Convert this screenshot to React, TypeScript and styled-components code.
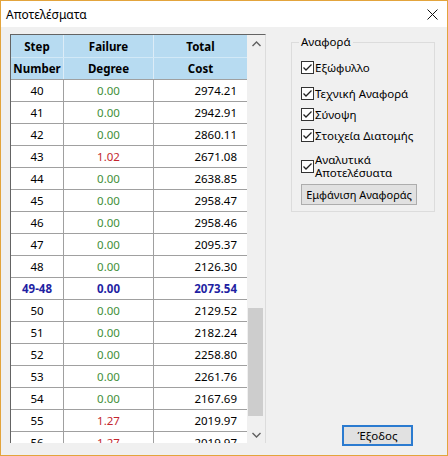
import React from "react";
import styled, { createGlobalStyle } from "styled-components";

const GlobalStyle = createGlobalStyle`
  html, body {
    margin: 0;
    padding: 0;
    background: #f0f0f0;
  }
  body {
    font-family: "Noto Sans", "Liberation Sans", sans-serif;
    font-size: 11.5px;
    color: #000;
  }
`;

type Row = { step: string; degree: string; cost: string; kind?: "fail" | "best" };

const rows: Row[] = [
  { step: "40", degree: "0.00", cost: "2974.21" },
  { step: "41", degree: "0.00", cost: "2942.91" },
  { step: "42", degree: "0.00", cost: "2860.11" },
  { step: "43", degree: "1.02", cost: "2671.08", kind: "fail" },
  { step: "44", degree: "0.00", cost: "2638.85" },
  { step: "45", degree: "0.00", cost: "2958.47" },
  { step: "46", degree: "0.00", cost: "2958.46" },
  { step: "47", degree: "0.00", cost: "2095.37" },
  { step: "48", degree: "0.00", cost: "2126.30" },
  { step: "49-48", degree: "0.00", cost: "2073.54", kind: "best" },
  { step: "50", degree: "0.00", cost: "2129.52" },
  { step: "51", degree: "0.00", cost: "2182.24" },
  { step: "52", degree: "0.00", cost: "2258.80" },
  { step: "53", degree: "0.00", cost: "2261.76" },
  { step: "54", degree: "0.00", cost: "2167.69" },
  { step: "55", degree: "1.27", cost: "2019.97", kind: "fail" },
  { step: "56", degree: "1.27", cost: "2019.97", kind: "fail" },
];

const options = [
  { label: "Εξώφυλλο", gap: 0 },
  { label: "Τεχνική Αναφορά", gap: 5 },
  { label: "Σύνοψη", gap: 0 },
  { label: "Στοιχεία Διατομής", gap: 0 },
];

const Check = () => (
  <svg width="13" height="13" viewBox="0 0 13 13">
    <rect x="0.5" y="0.5" width="12" height="12" fill="#fff" stroke="#333" />
    <path d="M2.5 6.5 L5 9 L10.5 3.5" fill="none" stroke="#222" strokeWidth="1.3" />
  </svg>
);

const App = () => {
  return (
    <Window>
      <GlobalStyle />
      <TitleBar>
        <span>Αποτελέσματα</span>
        <svg width="11" height="11" viewBox="0 0 11 11">
          <path d="M0.5 0.5 L10.5 10.5 M10.5 0.5 L0.5 10.5" stroke="#111" strokeWidth="1" />
        </svg>
      </TitleBar>
      <Body>
        <Grid>
          <Table>
            <HeadRow>
              <HeadCell>Step</HeadCell>
              <HeadCell>Failure</HeadCell>
              <HeadCell>Total</HeadCell>
            </HeadRow>
            <HeadRow>
              <HeadCell>Number</HeadCell>
              <HeadCell>Degree</HeadCell>
              <HeadCell>Cost</HeadCell>
            </HeadRow>
            {rows.map((r) => (
              <DataRow key={r.step} $kind={r.kind}>
                <Cell>{r.step}</Cell>
                <Cell $tone={r.kind === "best" ? "best" : r.kind === "fail" ? "fail" : "ok"}>
                  {r.degree}
                </Cell>
                <CostCell>{r.cost}</CostCell>
              </DataRow>
            ))}
          </Table>
          <ScrollBar>
            <Arrow>
              <svg width="9" height="6" viewBox="0 0 9 6">
                <path d="M0.5 5 L4.5 1 L8.5 5" fill="none" stroke="#606060" strokeWidth="1.4" />
              </svg>
            </Arrow>
            <Track>
              <Thumb />
            </Track>
            <Arrow>
              <svg width="9" height="6" viewBox="0 0 9 6">
                <path d="M0.5 1 L4.5 5 L8.5 1" fill="none" stroke="#606060" strokeWidth="1.4" />
              </svg>
            </Arrow>
          </ScrollBar>
        </Grid>
        <Side>
          <GroupBox>
            <Legend>Αναφορά</Legend>
            {options.map((o) => (
              <Option key={o.label} $gap={o.gap}>
                <Check />
                <span>{o.label}</span>
              </Option>
            ))}
            <Option $tall $gap={5}>
              <Check />
              <span>
                Αναλυτικά
                <br />
                Αποτελέσυατα
              </span>
            </Option>
            <Button>Εμφάνιση Αναφοράς</Button>
          </GroupBox>
          <ExitButton>Έξοδος</ExitButton>
        </Side>
      </Body>
    </Window>
  );
};

export default App;

const Window = styled.div`
  width: 448px;
  height: 456px;
  box-sizing: border-box;
  border: 1px solid #e3a43c;
  background: #f0f0f0;
  display: flex;
  flex-direction: column;
  overflow: hidden;
`;

const TitleBar = styled.div`
  height: 26px;
  background: #fff;
  display: flex;
  align-items: center;
  justify-content: space-between;
  padding: 0 9px 0 5px;
  font-size: 12px;
  flex-shrink: 0;
`;

const Body = styled.div`
  flex: 1;
  display: flex;
  padding: 7px 0 9px 9px;
  min-height: 0;
`;

const Grid = styled.div`
  width: 256px;
  box-sizing: border-box;
  margin-bottom: 3px;
  display: flex;
  border-top: 1px solid #646464;
  border-left: 1px solid #646464;
  border-right: 1px solid #dcdcdc;
  background: #f0f0f0;
  overflow: hidden;
  flex-shrink: 0;
`;

const Table = styled.div`
  width: 236px;
  display: flex;
  flex-direction: column;
  overflow: hidden;
  background: #fff;
`;

const HeadRow = styled.div`
  display: grid;
  grid-template-columns: 53px 90px 93px;
  height: 22px;
  flex-shrink: 0;
  background: #b7dbf1;
  border-bottom: 1px solid #d2e9f7;
  &:nth-child(2) {
    height: 21px;
    border-bottom: 1px solid #a0a0a0;
  }
`;

const HeadCell = styled.div`
  display: flex;
  align-items: center;
  justify-content: center;
  font-weight: bold;
  border-right: 1px solid #dcecf7;
  &:last-child {
    border-right: none;
  }
`;

const DataRow = styled.div<{ $kind?: string }>`
  display: grid;
  grid-template-columns: 53px 90px 93px;
  height: 21px;
  flex-shrink: 0;
  border-bottom: 1px solid #a0a0a0;
  font-weight: ${(p) => (p.$kind === "best" ? "bold" : "normal")};
  color: ${(p) => (p.$kind === "best" ? "#1f1fa3" : "#000")};
`;

const toneColor: Record<string, string> = {
  ok: "#3f8f3a",
  fail: "#c4262e",
  best: "#1f1fa3",
};

const Cell = styled.div<{ $tone?: string }>`
  display: flex;
  align-items: center;
  justify-content: center;
  border-right: 1px solid #a0a0a0;
  color: ${(p) => (p.$tone ? toneColor[p.$tone] : "inherit")};
`;

const CostCell = styled.div`
  display: flex;
  align-items: center;
  justify-content: flex-end;
  padding-right: 10px;
`;

const ScrollBar = styled.div`
  width: 18px;
  display: flex;
  flex-direction: column;
  background: #f0f0f0;
`;

const Arrow = styled.div`
  height: 17px;
  display: flex;
  align-items: center;
  justify-content: center;
  flex-shrink: 0;
`;

const Track = styled.div`
  flex: 1;
  display: flex;
  flex-direction: column;
  justify-content: flex-end;
  padding: 0 2px 10px 1px;
`;

const Thumb = styled.div`
  height: 108px;
  background: #cdcdcd;
`;

const Side = styled.div`
  flex: 1;
  display: flex;
  flex-direction: column;
  padding: 0 12px 0 25px;
`;

const GroupBox = styled.fieldset`
  margin: 0;
  padding: 7px 0 6px 9px;
  border: 1px solid #dcdcdc;
  border-radius: 0;
  display: flex;
  flex-direction: column;
  min-width: 0;
`;

const Legend = styled.legend`
  padding: 0 2px;
  margin-left: -2px;
  line-height: 16px;
`;

const Option = styled.label<{ $tall?: boolean; $gap: number }>`
  display: flex;
  align-items: center;
  gap: 1px;
  height: ${(p) => (p.$tall ? "30px" : "21px")};
  margin-top: ${(p) => p.$gap}px;
  line-height: 13px;
  white-space: nowrap;
  svg {
    flex-shrink: 0;
  }
`;

const Button = styled.div`
  margin-top: 3px;
  width: 116px;
  height: 21px;
  box-sizing: border-box;
  border: 1px solid #adadad;
  background: #e1e1e1;
  display: flex;
  align-items: center;
  justify-content: center;
  white-space: nowrap;
  font-size: 11px;
`;

const ExitButton = styled.div`
  margin-top: auto;
  align-self: flex-end;
  margin-right: 22px;
  width: 71px;
  height: 21px;
  box-sizing: border-box;
  border: 2px solid #2b7bd0;
  background: #e1e1e1;
  display: flex;
  align-items: center;
  justify-content: center;
`;
